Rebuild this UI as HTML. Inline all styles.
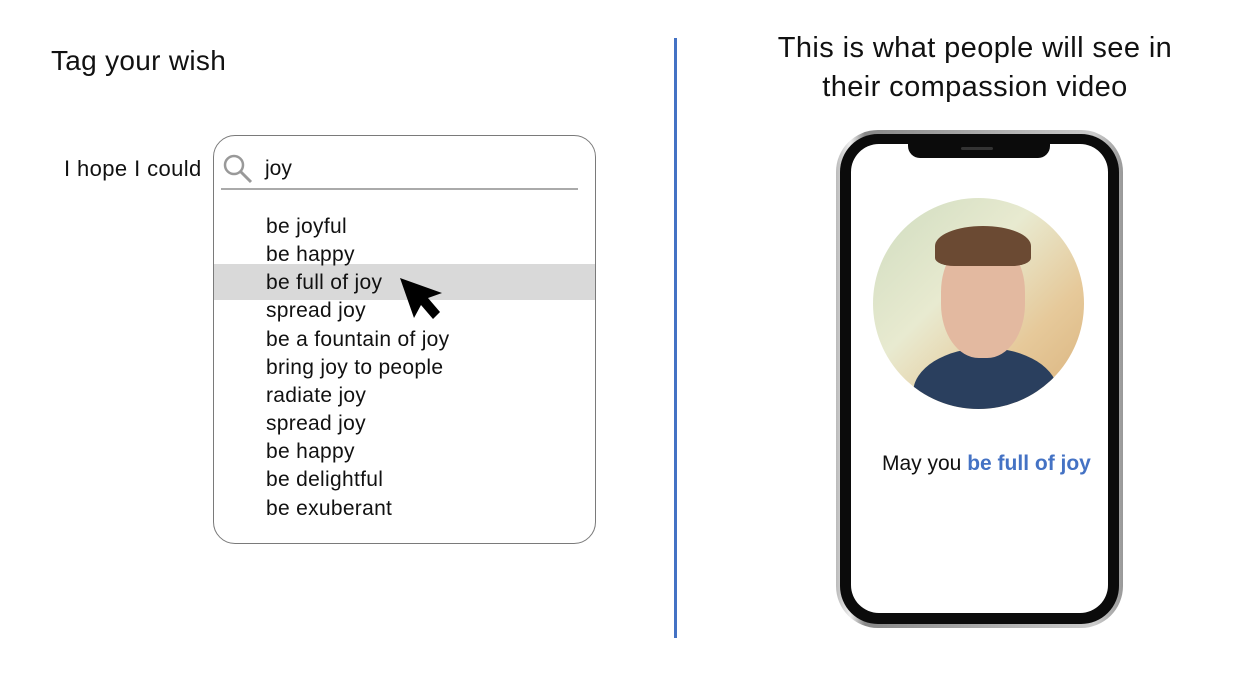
<!DOCTYPE html>
<html><head><style>
body{margin:0;width:1242px;height:700px;background:#fff;position:relative;overflow:hidden;font-family:"Liberation Sans",sans-serif;color:#111}
.a{position:absolute;white-space:nowrap}
.li{position:absolute;left:266px;font-size:21px;letter-spacing:0.3px}
</style></head><body>
<div class="a" style="left:51px;top:45px;font-size:28px;letter-spacing:0.3px">Tag your wish</div>
<div class="a" style="left:64px;top:156px;font-size:22px;letter-spacing:0.4px">I hope I could</div>
<div class="a" style="left:213px;top:135px;width:381px;height:407px;border:1.5px solid #7a7a7a;border-radius:22px"></div>
<div class="a" style="left:221px;top:188px;width:357px;height:1.5px;background:#aaa"></div>
<div class="a" style="left:214px;top:264px;width:381px;height:36px;background:#d9d9d9"></div>
<svg class="a" style="left:220px;top:151px" width="36" height="36"><circle cx="14" cy="14" r="9" fill="none" stroke="#999" stroke-width="2.5"/><line x1="20.5" y1="20.5" x2="31" y2="31" stroke="#999" stroke-width="3"/></svg>
<div class="a" style="left:265px;top:157px;font-size:21px">joy</div>
<div class="li" style="top:215px">be joyful</div>
<div class="li" style="top:243px">be happy</div>
<div class="li" style="top:271px">be full of joy</div>
<div class="li" style="top:299px">spread joy</div>
<div class="li" style="top:328px">be a fountain of joy</div>
<div class="li" style="top:356px">bring joy to people</div>
<div class="li" style="top:384px">radiate joy</div>
<div class="li" style="top:412px">spread joy</div>
<div class="li" style="top:440px">be happy</div>
<div class="li" style="top:468px">be delightful</div>
<div class="li" style="top:497px">be exuberant</div>
<svg class="a" style="left:398px;top:276px" width="50" height="50"><path d="M2 2 L44 17 L30 22 L42 36 L35 43 L23 29 L16 42 Z" fill="#000"/></svg>
<div class="a" style="left:674px;top:38px;width:3px;height:600px;background:#4472c4"></div>
<div class="a" style="left:740px;top:29px;width:470px;text-align:center;font-size:29px;line-height:39px;letter-spacing:0.4px">This is what people will see in<br>their compassion video</div>
<div class="a" style="left:836px;top:130px;width:287px;height:498px;border-radius:42px;background:linear-gradient(90deg,#bbb,#eee 5%,#888 10%,#ccc 90%,#999);"></div>
<div class="a" style="left:840px;top:134px;width:279px;height:490px;border-radius:38px;background:#0b0b0b"></div>
<div class="a" style="left:851px;top:144px;width:257px;height:469px;border-radius:28px;background:#fff"></div>
<div class="a" style="left:908px;top:143px;width:142px;height:15px;border-radius:0 0 12px 12px;background:#0b0b0b"></div>
<div class="a" style="left:961px;top:147px;width:32px;height:3px;border-radius:2px;background:#333"></div>
<div class="a" style="left:873px;top:198px;width:211px;height:211px;border-radius:50%;overflow:hidden;background:linear-gradient(135deg,#cfdcbf,#e8ead0 40%,#e6c99a 70%,#d9b27c)">
<div class="a" style="left:40px;top:150px;width:145px;height:90px;border-radius:50% 50% 0 0;background:#2a3f5e"></div>
<div class="a" style="left:68px;top:40px;width:84px;height:120px;border-radius:45%;background:#e3b9a0"></div>
<div class="a" style="left:62px;top:28px;width:96px;height:40px;border-radius:50% 50% 20% 20%;background:#6b4a33"></div>
</div>
<div class="a" style="left:882px;top:452px;font-size:21px">May you <b style="color:#4472c4">be full of joy</b></div>
</body></html>
